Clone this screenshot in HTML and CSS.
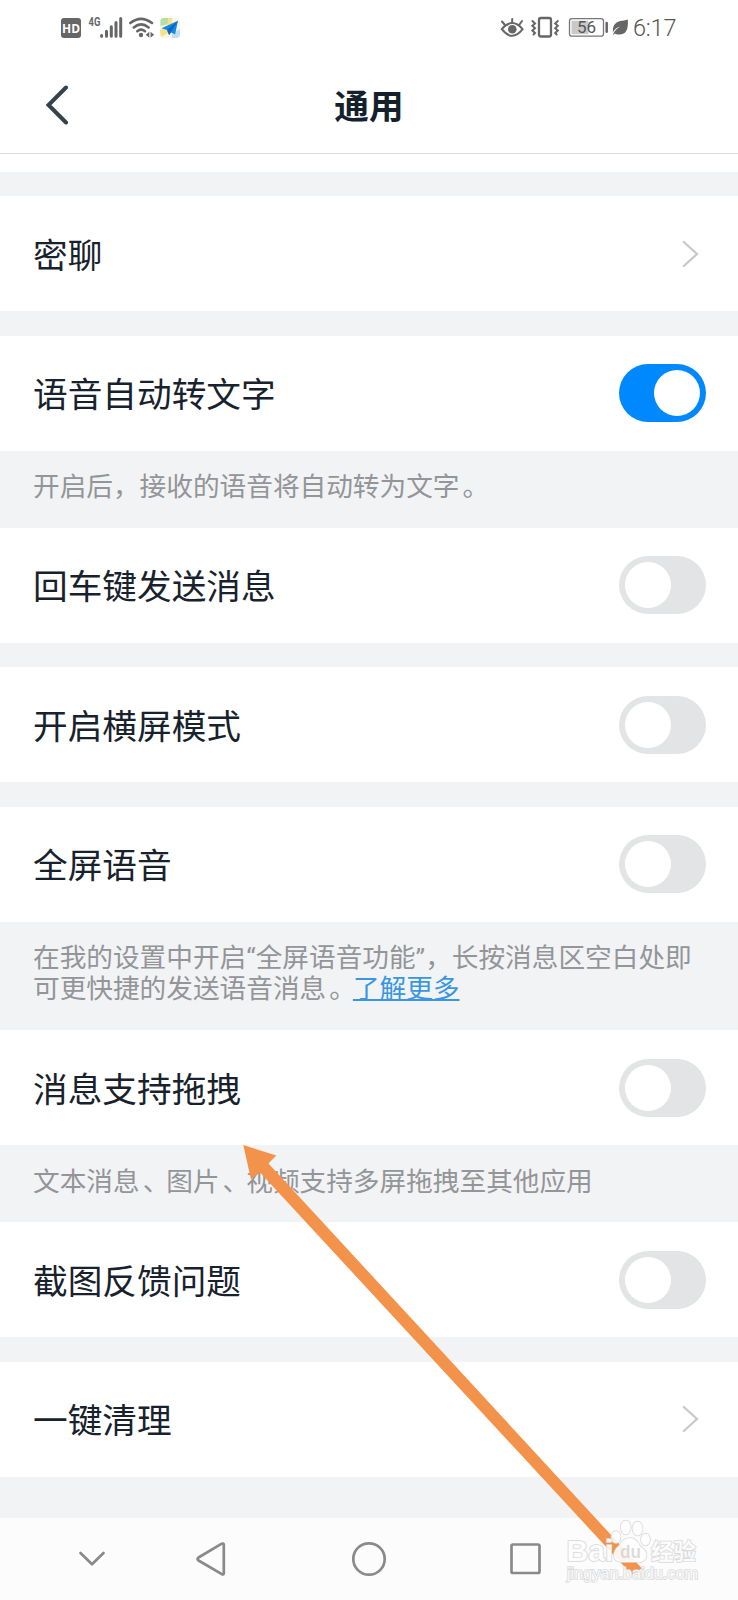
FILE: index.html
```html
<!DOCTYPE html>
<html lang="zh-CN">
<head>
<meta charset="utf-8">
<title>通用</title>
<link rel="stylesheet" href="styles.css">
</head>
<body>
<div class="screen">
  <div class="status">
    <svg class="status-left" width="140" height="56" viewBox="40 0 140 56">
      <rect x="61" y="18" width="20" height="20" rx="3" fill="#666"/>
      <text class="hd" x="62" y="32.8" textLength="18" lengthAdjust="spacingAndGlyphs">HD</text>
      <text class="net" x="88.6" y="26.4" textLength="11.8" lengthAdjust="spacingAndGlyphs">4G</text>
      <g stroke="#666" stroke-width="3" stroke-linecap="round">
        <path d="M101.6 35.6v.6M106.5 31.3v4.9M111.3 26.8v9.4M116 22.6v13.6M120.7 18.6v17.6"/>
      </g>
      <g fill="none" stroke="#666" stroke-width="2.6" stroke-linecap="round">
        <path d="M130.3 23Q141 14.6 152 23M133.8 27.4Q141 21.4 148.6 27.4M137.3 31.2Q141 28.2 145 31.2"/>
      </g>
      <circle cx="141" cy="35" r="2.2" fill="#666"/>
      <path d="M149.3 31.8v6l-3.5-3zM150.6 31.8v6l3.5-3z" fill="#666"/>
      <rect x="160" y="18" width="20" height="20" rx="4" fill="#f8f4e4"/>
      <path d="M160.5 21q0-3 3-3h4.500v6l-7.500 2z" fill="#b5dda6"/>
      <path d="M168 18h4v8l-5 2z" fill="#f7e08a"/>
      <path d="M160 30l8-3v6l-7 4z" fill="#f7e08a"/>
      <path d="M172 33l8-4v5q0 4-4 4h-4z" fill="#c2dcf5"/>
      <path d="M178 20.800l-16.500 7.500 5.600 1.700 2 5 2-2.600 4 1.800z" fill="#1687e8"/>
      <path d="M178 20.800l-10.900 9.200 2 5z" fill="#0b66be"/>
    </svg>
    <div class="status-right">
      <svg width="150" height="56" viewBox="480 0 150 56">
        <g fill="none" stroke="#666" stroke-width="2" stroke-linecap="round">
          <path d="M501.8 29.2Q512.2 17 522.6 29.2Q512.2 42.5 501.8 29.2z"/>
          <path d="M502 21.5l2.500 3M512.200 19v3M522 21l-2.500 3.500"/>
          <rect x="539" y="18" width="12" height="18.500" rx="2" stroke-width="2.300"/>
          <path d="M532.400 21l2.600 2.400-2.600 2.400 2.600 2.400-2.600 2.400 2.600 2.400-1.500 1.500M557.800 21l-2.600 2.400 2.600 2.400-2.600 2.400 2.600 2.400-2.600 2.400 1.500 1.500"/>
        </g>
        <circle cx="512.300" cy="29.300" r="4.300" fill="#666"/>
        <rect x="569.500" y="18.700" width="34" height="17.500" rx="2.500" fill="#fff" stroke="#777" stroke-width="1.300"/>
        <rect x="571.500" y="20.700" width="17" height="13.500" fill="#c9c9c9"/>
        <path d="M606.700 23v8.700" stroke="#666" stroke-width="2.500" stroke-linecap="round"/>
        <text class="battery" x="577" y="33.400" textLength="19">56</text>
        <path d="M627.800 19.500Q629 35 619 34.500Q616.500 34.800 614.700 33.600L612.800 35.500Q613.500 31 620 26.500Q615 28 612.800 32.500Q612 23 620 21Q624.500 20.500 627.800 19.500z" fill="#666"/>
      </svg>
      <span class="time">6:17</span>
    </div>
  </div>

  <header class="header">
    <svg class="back" width="24" height="40" viewBox="0 0 24 40"><path d="M21 2.500L3.500 20L21 37.500" fill="none" stroke="#36424c" stroke-width="4" stroke-linecap="round"/></svg>
    <h1 class="title">通用</h1>
  </header>

  <main class="list">
    <div class="row"><span>密聊</span><svg class="chevron" width="18" height="28" viewBox="0 0 18 28"><path d="M2.800 2L16 14L2.800 26" fill="none" stroke="#c7c9cc" stroke-width="2.300" stroke-linecap="round"/></svg></div>
    <div class="gap"></div>
    <div class="row"><span>语音自动转文字</span><i class="switch on"></i></div>
    <p class="note">开启后，接收的语音将自动转为文字<span class="stop">。</span></p>
    <div class="row"><span>回车键发送消息</span><i class="switch"></i></div>
    <div class="gap"></div>
    <div class="row"><span>开启横屏模式</span><i class="switch"></i></div>
    <div class="gap"></div>
    <div class="row"><span>全屏语音</span><i class="switch"></i></div>
    <p class="note">在我的设置中开启“全屏语音功能”，长按消息区空白处即<br>可更快捷的发送语音消息<span class="stop">。</span><a class="more">了解更多</a></p>
    <div class="row"><span>消息支持拖拽</span><i class="switch"></i></div>
    <p class="note">文本消息<span class="stop">、</span>图片<span class="stop">、</span>视频支持多屏拖拽至其他应用</p>
    <div class="row"><span>截图反馈问题</span><i class="switch"></i></div>
    <div class="gap"></div>
    <div class="row"><span>一键清理</span><svg class="chevron" width="18" height="28" viewBox="0 0 18 28"><path d="M2.800 2L16 14L2.800 26" fill="none" stroke="#c7c9cc" stroke-width="2.300" stroke-linecap="round"/></svg></div>
  </main>

  <nav class="nav">
    <svg width="738" height="82" viewBox="0 1518 738 82" fill="none" stroke="#8a8a8a" stroke-width="2.700" stroke-linecap="round" stroke-linejoin="round">
      <path d="M80.500 1553L92 1564.300L103.500 1553"/>
      <path d="M223.800 1544.500V1573.500Q223.500 1575 221.800 1574.200L198.500 1560.500Q196.500 1559 198.500 1557.500L221.800 1543.700Q223.500 1543 223.800 1544.500z"/>
      <circle cx="369" cy="1559" r="15.700"/>
      <rect x="511.500" y="1544.500" width="28" height="28.500" rx="1.500"/>
    </svg>
  </nav>

  <svg class="overlay" width="738" height="1600" viewBox="0 0 738 1600">
    <path d="M243.300 1145L276.300 1155.500L268.500 1163.500L642 1568.500L637 1571L634 1577L260 1172.500L251 1179.500z" fill="#f3924a"/>
    <g class="mark">
      <ellipse cx="616" cy="1537" rx="4.500" ry="6"/>
      <ellipse cx="625.700" cy="1527.500" rx="5" ry="7"/>
      <ellipse cx="637.500" cy="1528.500" rx="5" ry="7"/>
      <ellipse cx="645.500" cy="1539.500" rx="4.500" ry="6"/>
      <text class="bai" x="566.500" y="1561" textLength="47" lengthAdjust="spacingAndGlyphs">Bai</text>
      <path class="palm" d="M630 1538Q636 1538 640 1546Q647 1551 646.500 1556Q645 1563 637 1562H622Q614 1562.500 614 1555Q614 1550 619 1546Q623 1538 630 1538z"/>
      <text class="du" x="620" y="1558" textLength="21" lengthAdjust="spacingAndGlyphs">du</text>
      <text class="jy" x="651" y="1560" textLength="45">经验</text>
      <text class="url" x="567" y="1578.500" textLength="131" lengthAdjust="spacingAndGlyphs">jingyan.baidu.com</text>
    </g>
  </svg>
</div>
</body>
</html>
```

FILE: styles.css
```css
body {
  margin: 0;
  font-family: Roboto, "Noto Sans CJK SC", sans-serif;
}

.screen {
  position: relative;
  display: flex;
  flex-direction: column;
  width: 738px;
  height: 1600px;
  overflow: hidden;
  background: #f2f3f5;
}

.status {
  display: flex;
  justify-content: space-between;
  height: 56px;
  padding: 0 60px 0 40px;
  background: #fff;
}

.status-left {
  width: 140px;
}

.status-right {
  display: flex;
  width: 198px;
}

.status-right svg {
  flex: none;
}

.time {
  margin-left: 3px;
  font-size: 23.5px;
  font-weight: 300;
  line-height: 57px;
  letter-spacing: -0.2px;
  color: #555;
}

.hd {
  font: bold 13px "Open Sans", sans-serif;
  fill: #fff;
}

.net {
  font: bold 13px Roboto, sans-serif;
  fill: #666;
}

.battery {
  font: 17px Roboto, sans-serif;
  fill: #555;
}

.header {
  display: grid;
  grid-template-columns: 100px 1fr 100px;
  align-items: center;
  box-sizing: border-box;
  height: 98px;
  border-bottom: 1px solid #dcdddf;
  background: #fff;
}

.back {
  margin: 1px 0 0 45px;
}

.title {
  margin: 5px 0 0;
  text-align: center;
  font-size: 34.67px;
  font-weight: 700;
  line-height: 50px;
  color: #14202b;
}

.list {
  display: flex;
  flex-direction: column;
  border-top: 18px solid #fff;
  padding-top: 24px;
}

.row {
  display: flex;
  align-items: center;
  justify-content: space-between;
  box-sizing: border-box;
  height: 115px;
  padding: 0 32.5px 0 33px;
  background: #fff;
  font-size: 34.67px;
  line-height: 50px;
  color: #18222c;
}

.row span {
  margin-top: 4px;
}

.chevron {
  margin-right: 7px;
}

.gap {
  height: 24.5px;
}

.switch {
  display: flex;
  box-sizing: border-box;
  width: 86.5px;
  height: 58px;
  padding: 6px;
  border-radius: 29px;
  background: #e3e4e6;
}

.switch::before {
  content: "";
  width: 46px;
  height: 46px;
  border-radius: 50%;
  background: #fff;
}

.switch.on {
  justify-content: flex-end;
  background: #0089ff;
}

.note {
  margin: 0;
  padding: 21.5px 33px 24.5px;
  font-size: 26.67px;
  line-height: 31.2px;
  white-space: nowrap;
  color: #939598;
}

.stop {
  position: relative;
  left: 3px;
}

.more {
  color: #3a96e2;
  text-decoration: underline;
  text-decoration-thickness: 1.5px;
}

.nav {
  height: 82px;
  margin-top: auto;
  background: #fcfcfc;
}

.nav svg {
  display: block;
}

.overlay {
  position: absolute;
  top: 0;
  left: 0;
}

.mark {
  fill: #fff;
  fill-opacity: 0.85;
  stroke: #d9dadb;
  stroke-width: 1.6px;
  paint-order: stroke;
}

.mark .palm {
  fill-opacity: 0.9;
}

.bai {
  font: bold 29px "Liberation Sans", sans-serif;
}

.mark .du {
  font: bold 19px "Liberation Sans", sans-serif;
  fill: #d5d5d5;
  stroke: none;
}

.jy {
  font: bold 22.5px "Noto Sans CJK SC", sans-serif;
}

.url {
  font: 16.5px "Liberation Sans", sans-serif;
}
```
